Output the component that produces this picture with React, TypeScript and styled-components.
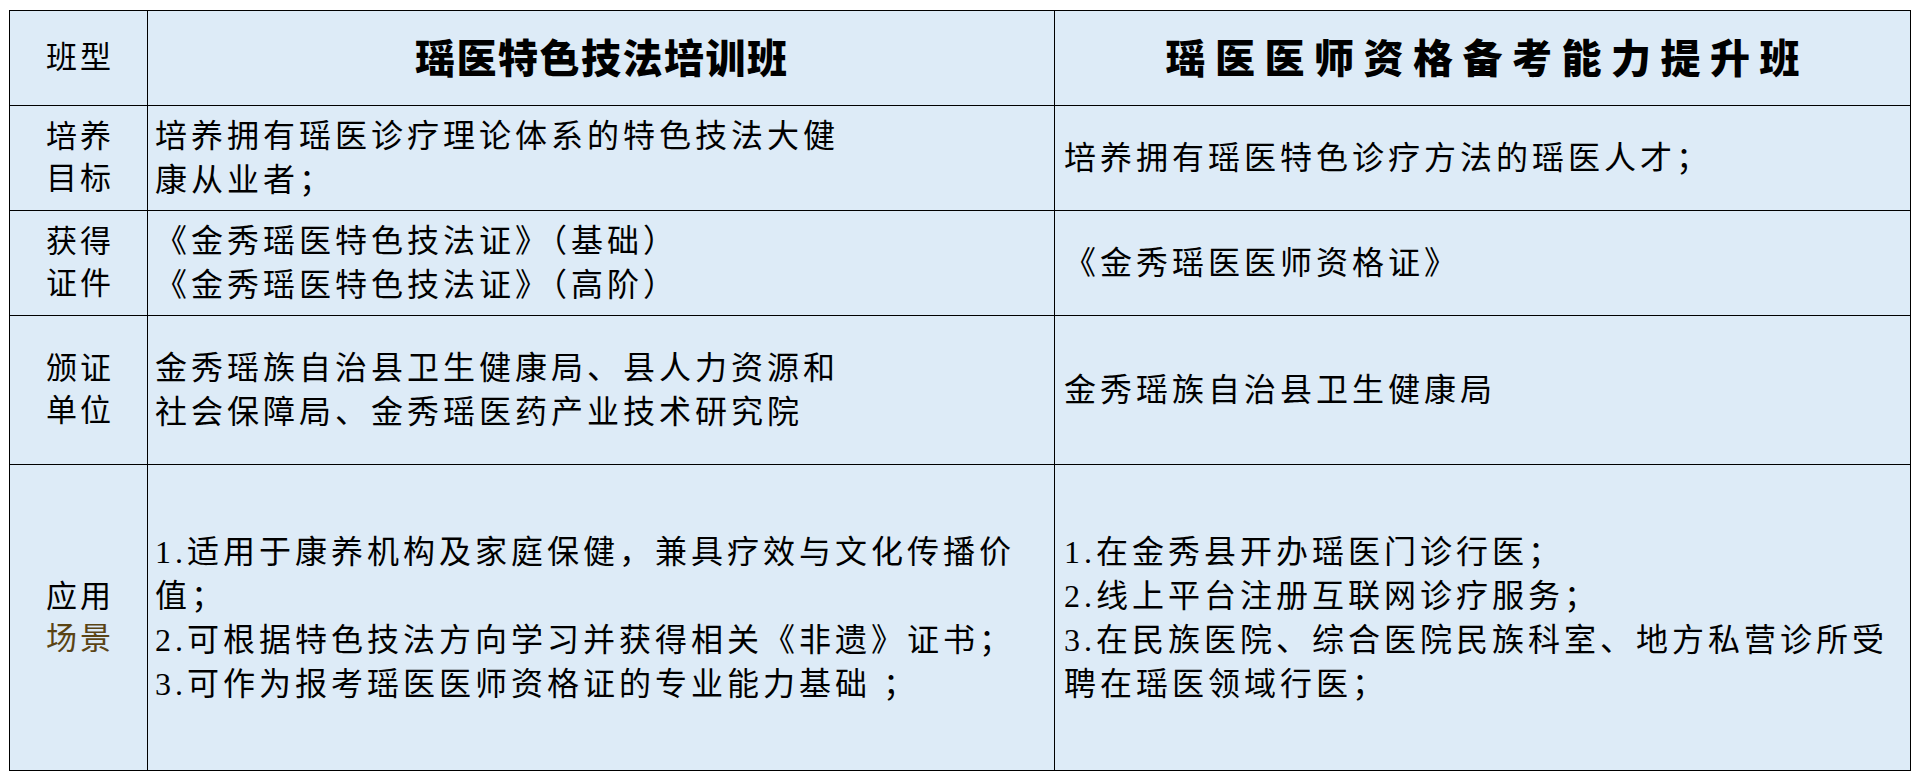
import React from 'react';
import styled, { createGlobalStyle } from 'styled-components';

const GlobalStyle = createGlobalStyle`
  html, body {
    margin: 0;
    padding: 0;
    background: #ffffff;
  }
  body {
    font-family: "Liberation Serif", "Noto Sans CJK SC", serif;
    color: #000;
  }
`;

// 表格外框：黑色底 + 1px 间隙画出格线
const Table = styled.div`
  margin: 10px 0 0 9px;
  width: 1902px;
  display: grid;
  grid-template-columns: 137px 906px 855px;
  grid-template-rows: 94px 104px 104px 148px 305px;
  gap: 1px;
  padding: 1px;
  background: #000;
  box-sizing: border-box;
`;

const Cell = styled.div`
  background: #ddebf7;
  display: flex;
  align-items: center;
  box-sizing: border-box;
  overflow: hidden;
`;

const LabelCell = styled(Cell)`
  justify-content: center;
  text-align: center;
  font-size: 31px;
  line-height: 42px;
  letter-spacing: 3px;
  padding-left: 3px;
`;

const Tint = styled.span<{ $color?: string }>`
  color: ${(p) => p.$color || '#000'};
`;

const HeadCell = styled(Cell)<{ $spacing: number }>`
  justify-content: center;
  font-family: "Noto Sans CJK SC", sans-serif;
  font-weight: 900;
  font-size: 40px;
  letter-spacing: ${(p) => p.$spacing}px;
  padding-left: ${(p) => p.$spacing}px;
  padding-bottom: 4px;
`;

const BodyCell = styled(Cell)<{ $pad: number }>`
  padding-left: ${(p) => p.$pad}px;
  font-size: 32px;
  line-height: 44px;
  letter-spacing: 4px;
  white-space: nowrap;
`;

const Lines = styled.div`
  display: flex;
  flex-direction: column;
`;

type TextProps = { lines: string[]; pad: number };

function Body({ lines, pad }: TextProps) {
  return (
    <BodyCell $pad={pad}>
      <Lines>
        {lines.map((l, i) => (
          <span key={i}>{l}</span>
        ))}
      </Lines>
    </BodyCell>
  );
}

type Label = { top: string; bottom: string; tint?: string };

function LabelText({ top, bottom, tint }: Label) {
  return (
    <LabelCell>
      <div>
        {top}
        <br />
        <Tint $color={tint}>{bottom}</Tint>
      </div>
    </LabelCell>
  );
}

const rows: { label: Label; left: string[]; right: string[] }[] = [
  {
    label: { top: '培养', bottom: '目标' },
    left: ['培养拥有瑶医诊疗理论体系的特色技法大健', '康从业者；'],
    right: ['培养拥有瑶医特色诊疗方法的瑶医人才；'],
  },
  {
    label: { top: '获得', bottom: '证件' },
    left: ['《金秀瑶医特色技法证》（基础）', '《金秀瑶医特色技法证》（高阶）'],
    right: ['《金秀瑶医医师资格证》'],
  },
  {
    label: { top: '颁证', bottom: '单位' },
    left: ['金秀瑶族自治县卫生健康局、县人力资源和', '社会保障局、金秀瑶医药产业技术研究院'],
    right: ['金秀瑶族自治县卫生健康局'],
  },
  {
    label: { top: '应用', bottom: '场景', tint: '#5a4414' },
    left: [
      '1.适用于康养机构及家庭保健，兼具疗效与文化传播价',
      '值；',
      '2.可根据特色技法方向学习并获得相关《非遗》证书；',
      '3.可作为报考瑶医医师资格证的专业能力基础 ；',
    ],
    right: [
      '1.在金秀县开办瑶医门诊行医；',
      '2.线上平台注册互联网诊疗服务；',
      '3.在民族医院、综合医院民族科室、地方私营诊所受',
      '聘在瑶医领域行医；',
    ],
  },
];

export default function App() {
  return (
    <>
      <GlobalStyle />
      <Table>
        <LabelCell>班型</LabelCell>
        <HeadCell $spacing={1.5}>瑶医特色技法培训班</HeadCell>
        <HeadCell $spacing={9.5}>瑶医医师资格备考能力提升班</HeadCell>
        {rows.map((r, i) => (
          <React.Fragment key={i}>
            <LabelText {...r.label} />
            <Body lines={r.left} pad={7} />
            <Body lines={r.right} pad={9} />
          </React.Fragment>
        ))}
      </Table>
    </>
  );
}
